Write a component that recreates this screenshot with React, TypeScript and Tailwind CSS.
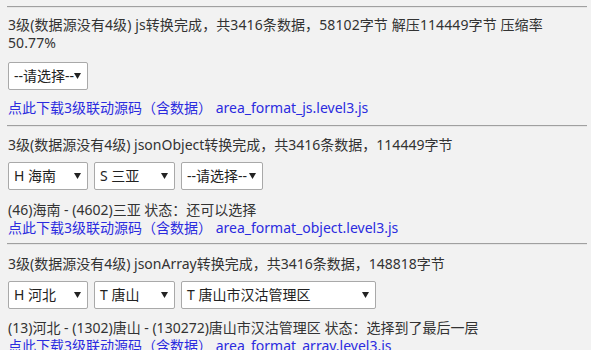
import React from 'react'

const font = { fontFamily: '"Noto Sans", "Noto Sans CJK SC", sans-serif' }

function Rule({ className = '' }: { className?: string }) {
  return <div className={`ml-[7px] w-[580px] border-t border-b border-t-[#a0a0a0] border-b-[#e6e6e6] ${className}`} />
}

function FakeSelect({ label, width }: { label: string; width: string }) {
  return (
    <div className={`${width} h-[28px] bg-white border border-[#a9a9a9] rounded-[2px] flex items-center justify-between pl-[5px] pr-[6px] text-[14px] text-[#222]`}>
      <span className="whitespace-nowrap">{label}</span>
      <svg width="7" height="6" viewBox="0 0 7 6" className="shrink-0">
        <path d="M0 0 H7 L3.5 6 Z" fill="#222" />
      </svg>
    </div>
  )
}

function Link({ file }: { file: string }) {
  return (
    <div className="text-[#2b2bdf] leading-[18px] whitespace-nowrap">
      点此下载3级联动源码（含数据） <span>{file}</span>
    </div>
  )
}

export default function App() {
  return (
    <div className="w-[591px] h-[350px] overflow-hidden bg-[#f2f2f2] text-[14px] leading-[18px] text-[#333]" style={font}>
      <Rule className="mt-[6px]" />
      <div className="pl-[8px] pr-[4px]">
        <p className="mt-[8px] w-[560px] tracking-[0.1px]">
          3级(数据源没有4级) js转换完成，共3416条数据，58102字节 解压114449字节 压缩率 50.77%
        </p>
        <div className="mt-[10px] flex">
          <FakeSelect label="--请选择--" width="w-[80px]" />
        </div>
        <div className="mt-[9px]">
          <Link file="area_format_js.level3.js" />
        </div>
      </div>

      <Rule className="mt-[8px]" />
      <div className="pl-[8px] pr-[4px]">
        <p className="mt-[9px]">3级(数据源没有4级) jsonObject转换完成，共3416条数据，114449字节</p>
        <div className="mt-[8px] flex gap-[6px]">
          <FakeSelect label="H 海南" width="w-[80px]" />
          <FakeSelect label="S 三亚" width="w-[81px]" />
          <FakeSelect label="--请选择--" width="w-[82px]" />
        </div>
        <p className="mt-[11px]">(46)海南 - (4602)三亚 状态：还可以选择</p>
        <Link file="area_format_object.level3.js" />
      </div>

      <Rule className="mt-[6px]" />
      <div className="pl-[8px] pr-[4px]">
        <p className="mt-[10px]">3级(数据源没有4级) jsonArray转换完成，共3416条数据，148818字节</p>
        <div className="mt-[8px] flex gap-[6px]">
          <FakeSelect label="H 河北" width="w-[80px]" />
          <FakeSelect label="T 唐山" width="w-[81px]" />
          <FakeSelect label="T 唐山市汉沽管理区" width="w-[195px]" />
        </div>
        <p className="mt-[10px]">(13)河北 - (1302)唐山 - (130272)唐山市汉沽管理区 状态：选择到了最后一层</p>
        <Link file="area_format_array.level3.js" />
      </div>
    </div>
  )
}
